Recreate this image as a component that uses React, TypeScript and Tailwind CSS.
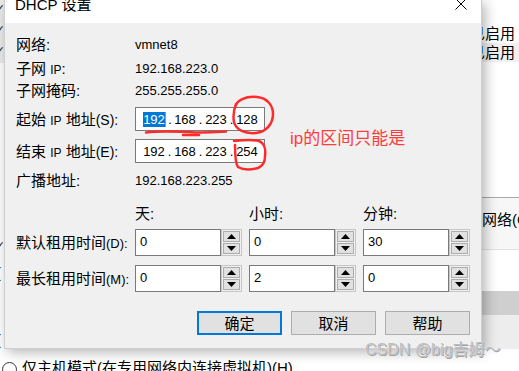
import React from 'react';

const UI_FONT = "[font-family:'Liberation_Sans','Noto_Sans_CJK_SC',sans-serif]";

const Tri: React.FC<{ up?: boolean }> = ({ up }) => (
  <svg width="9" height="5" viewBox="0 0 9 5">
    {up ? <polygon points="0,5 9,5 4.5,0" fill="#000" /> : <polygon points="0,0 9,0 4.5,5" fill="#000" />}
  </svg>
);

const SpinBox: React.FC<{ value: string }> = ({ value }) => (
  <div className="flex h-[27px] w-[107px]">
    <div className="flex-1 border border-[#7a7a7a] bg-white pl-[4px] pt-[4px] text-[13px] leading-[15px]">{value}</div>
    <div className="flex w-[21px] flex-col gap-px border border-[#c6c6c6] bg-[#f0f0f0] p-px">
      <div className="flex flex-1 items-center justify-center border border-[#adadad] bg-[#e1e1e1]">
        <Tri up />
      </div>
      <div className="flex flex-1 items-center justify-center border border-[#adadad] bg-[#e1e1e1]">
        <Tri />
      </div>
    </div>
  </div>
);

const IpBox: React.FC<{ octets: string[]; selectFirst?: boolean }> = ({ octets, selectFirst }) => (
  <div className="flex h-[24px] w-[130px] items-center border border-[#7a7a7a] bg-white pl-[7px] text-[13px] leading-[15px]">
    {octets.map((o, i) => (
      <React.Fragment key={i}>
        {i > 0 && <span className={i === 1 && selectFirst ? 'w-[8px] text-center' : 'w-[9px] text-center'}>.</span>}
        {i === 0 && selectFirst ? (
          <>
            <span className="h-[15px] w-[22px] bg-[#0078d7] text-center text-white">{o}</span>
            <span className="h-[15px] w-px bg-[#f08a00]" />
          </>
        ) : (
          <span className="w-[22px] text-center">{o}</span>
        )}
      </React.Fragment>
    ))}
  </div>
);

export default function App() {
  return (
    <div className={`relative h-[371px] w-[519px] overflow-hidden bg-white text-black ${UI_FONT}`}>
      {/* main window behind the dialog */}
      <div className="flex h-full flex-col">
        <div className="flex h-[349px]">
          <div className="flex w-[5px] flex-col overflow-hidden text-[13px] leading-none text-[#222]">
            <div className="flex h-[63px] flex-col bg-[#ebebeb]">
              <div className="flex h-[21px] items-center"><span className="-ml-[6px]">✓</span></div>
              <div className="flex h-[21px] items-center"><span className="-ml-[6px]">✓</span></div>
              <div className="flex h-[21px] items-center"><span className="-ml-[6px]">✓</span></div>
            </div>
            <div className="h-[175px]" />
            <div className="flex h-[20px] items-center"><span className="-ml-[6px]">✓</span></div>
            <div className="h-[5px]" />
            <div className="flex h-[20px] items-center text-[15px]"><span className="-ml-[4px]">(</span></div>
            <div className="h-[47px]" />
            <div className="flex h-[20px] items-center text-[15px]"><span className="-ml-[4px]">(</span></div>
          </div>
          <div className="flex-1" />
          <div className="flex w-[60px] flex-col text-[15px] leading-none">
            <div className="h-[23px]" />
            <div className="flex h-[20px] items-center justify-end whitespace-nowrap pr-[4px]">已启用</div>
            <div className="flex h-[19px] items-center justify-end whitespace-nowrap bg-[#f0f0f0] pr-[4px]">已启用</div>
            <div className="h-[135px]" />
            <div className="h-px bg-[#a8a8a8]" />
            <div className="flex h-[42px] items-center whitespace-nowrap bg-[#f7f7f7] pl-[23px]">网络(C)</div>
            <div className="h-[9px] bg-[#f7f7f7]" />
            <div className="h-px bg-[#e2e2e2]" />
            <div className="h-[41px]" />
            <div className="h-[24px] bg-[#cfcfcf]" />
            <div className="flex-1 bg-[#ededed]" />
          </div>
        </div>
        <div className="flex flex-1 items-start">
          <div className="ml-[2px] mt-[13px] h-[15px] w-[15px] rounded-full border border-[#333] bg-white" />
          <span className="ml-[5px] mt-[11px] whitespace-nowrap text-[15px] leading-none">仅主机模式(在专用网络内连接虚拟机)(H)</span>
        </div>
      </div>

      {/* DHCP dialog */}
      <div className="absolute left-[4px] top-0 flex h-[349px] w-[478px] flex-col border-x border-b border-[#cfcfcf] bg-[#f0f0f0] shadow-[3px_3px_12px_rgba(0,0,0,0.3)]">
        <div className="relative flex h-[23px] items-start bg-white">
          <span className="ml-[10px] -mt-[4px] whitespace-nowrap text-[15px] leading-[18px]">DHCP 设置</span>
          <svg className="absolute right-[14px] top-[-2px]" width="12" height="12" viewBox="0 0 12 12">
            <path d="M0.5 0.5 L11.5 11.5 M11.5 0.5 L0.5 11.5" stroke="#000" strokeWidth="1" />
          </svg>
        </div>

        <div className="flex flex-1 flex-col px-[11px] pt-[10px] text-[15px] leading-none">
          <div className="flex h-[22px] items-center">
            <span className="w-[119px]">网络:</span>
            <span className="text-[13px]">vmnet8</span>
          </div>
          <div className="mt-[2px] flex h-[22px] items-center">
            <span className="w-[119px]">子网 <span className="text-[12px]">IP</span>:</span>
            <span className="text-[13px]">192.168.223.0</span>
          </div>
          <div className="flex h-[22px] items-center">
            <span className="w-[119px]">子网掩码:</span>
            <span className="text-[13px]">255.255.255.0</span>
          </div>
          <div className="mt-[6px] flex h-[24px] items-center">
            <span className="w-[119px] whitespace-nowrap">起始 <span className="text-[12px]">IP</span> 地址<span className="text-[14px]">(S):</span></span>
            <IpBox octets={['192', '168', '223', '128']} selectFirst />
          </div>
          <div className="mt-[8px] flex h-[24px] items-center">
            <span className="w-[119px] whitespace-nowrap">结束 <span className="text-[12px]">IP</span> 地址<span className="text-[14px]">(E):</span></span>
            <IpBox octets={['192', '168', '223', '254']} />
          </div>
          <div className="mt-[6px] flex h-[22px] items-center">
            <span className="w-[119px]">广播地址:</span>
            <span className="text-[13px]">192.168.223.255</span>
          </div>

          <div className="mt-[12px] flex h-[20px] items-center">
            <span className="w-[119px]" />
            <div className="grid grid-cols-[107px_107px_106px] gap-x-[7px]">
              <span>天:</span>
              <span>小时:</span>
              <span>分钟:</span>
            </div>
          </div>
          <div className="mt-[6px] flex h-[27px] items-center">
            <span className="w-[119px] whitespace-nowrap">默认租用时间<span className="text-[13px]">(D):</span></span>
            <div className="flex gap-[7px]">
              <SpinBox value="0" />
              <SpinBox value="0" />
              <SpinBox value="30" />
            </div>
          </div>
          <div className="mt-[9px] flex h-[27px] items-center">
            <span className="w-[119px] whitespace-nowrap">最长租用时间<span className="text-[13px]">(M):</span></span>
            <div className="flex gap-[7px]">
              <SpinBox value="0" />
              <SpinBox value="2" />
              <SpinBox value="0" />
            </div>
          </div>

          <div className="mt-[19px] flex justify-end gap-[9px]">
            <button className="h-[24px] w-[85px] border-2 border-[#0078d7] bg-[#e1e1e1] text-[15px] leading-none">确定</button>
            <button className="h-[24px] w-[85px] border border-[#adadad] bg-[#e1e1e1] text-[15px] leading-none">取消</button>
            <button className="h-[24px] w-[85px] border border-[#adadad] bg-[#e1e1e1] text-[15px] leading-none">帮助</button>
          </div>
        </div>
      </div>

      {/* red pen marks drawn over the screenshot */}
      <svg className="pointer-events-none absolute inset-0" width="519" height="371" viewBox="0 0 519 371" fill="none">
        <path
          d="M235 108 C 236 100, 246 96, 257 97 C 267 98, 273 105, 273 114 C 273 124, 266 132, 256 133 C 245 134, 236 130, 234 122 C 233 117, 233 112, 236 104"
          stroke="#ff2b2b"
          strokeWidth="2.5"
          strokeLinecap="round"
        />
        <path
          d="M234 141 C 244 140, 255 140, 259 141 C 264 143, 266 149, 265 156 C 265 162, 263 166, 258 168 C 251 170, 243 170, 238 167 C 235 163, 235 152, 235 145"
          stroke="#ff2b2b"
          strokeWidth="2.5"
          strokeLinecap="round"
        />
        <path d="M146 132.5 C 160 131, 178 131.5, 195 132.5 C 208 133, 218 132, 226 131.5" stroke="#ff2b2b" strokeWidth="2.5" strokeLinecap="round" />
        <path d="M183 135 L 199 135" stroke="#ff2b2b" strokeWidth="2.5" strokeLinecap="round" />
      </svg>
      <span className="absolute left-[290px] top-[130px] whitespace-nowrap text-[17px] leading-none text-[#ff3b3b]">ip的区间只能是</span>

      {/* watermark */}
      <span className="absolute left-[365px] top-[342px] whitespace-nowrap text-[16px] leading-none text-[#bdbdbd] [text-shadow:0_0_1px_#fff,1px_1px_0_#9a9a9a]">
        CSDN @big吉姆～
      </span>
    </div>
  );
}
